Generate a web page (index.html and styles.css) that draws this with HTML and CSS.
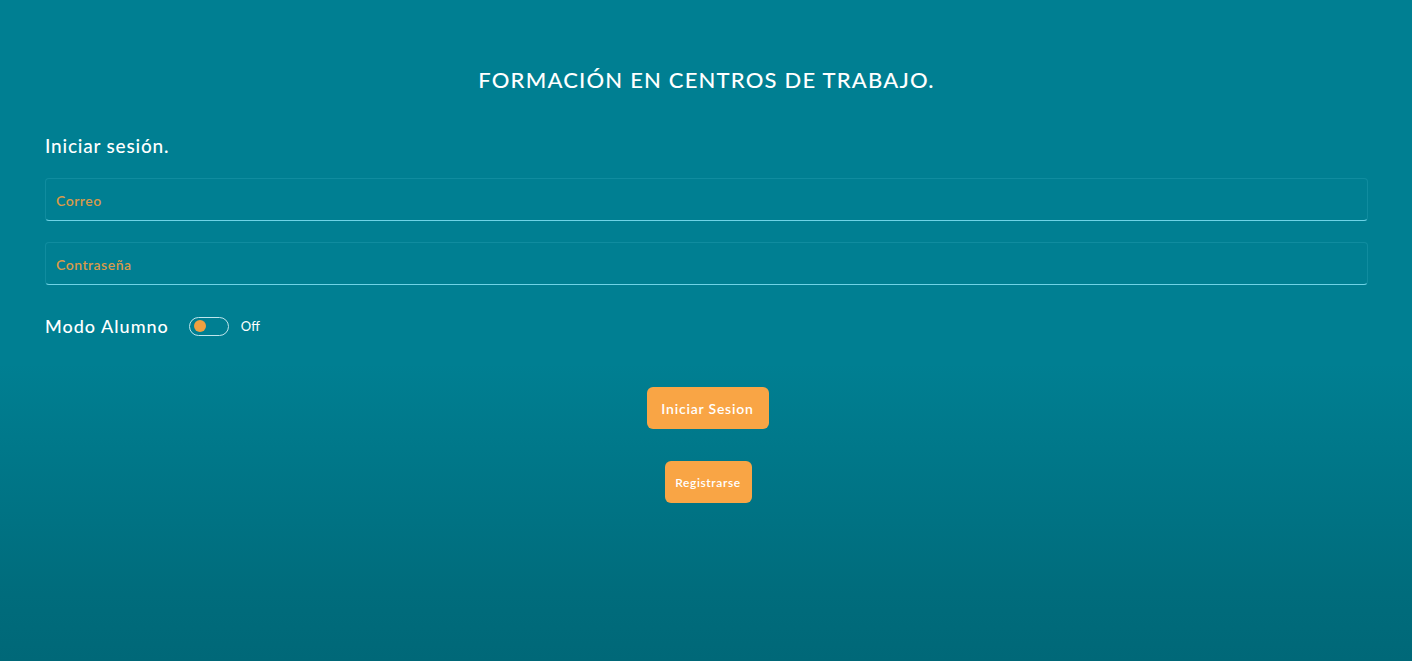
FILE: index.html
```html
<!DOCTYPE html>
<html lang="es">
<head>
<meta charset="utf-8">
<title>Formación en Centros de Trabajo</title>
<link rel="stylesheet" href="styles.css">
</head>
<body>
<main class="page">
  <h1 class="title">FORMACIÓN EN CENTROS DE TRABAJO.</h1>
  <h2 class="subtitle">Iniciar sesión.</h2>
  <form class="form">
    <label class="field"><input type="email" placeholder="Correo"></label>
    <label class="field"><input type="password" placeholder="Contraseña"></label>
    <div class="mode">
      <span class="mode-label">Modo Alumno</span>
      <span class="toggle"><span class="knob"></span></span>
      <span class="toggle-state">Off</span>
    </div>
    <div class="actions">
      <button type="button" class="btn btn-login">Iniciar Sesion</button>
      <button type="button" class="btn btn-register">Registrarse</button>
    </div>
  </form>
</main>
</body>
</html>
```
FILE: styles.css
```css
html, body {
  margin: 0;
  height: 100%;
}
body {
  background: linear-gradient(180deg, #007f92 0%, #007f92 55%, #006c7c 90%, #006878 100%);
  font-family: Lato, "Noto Sans", sans-serif;
  color: #ffffff;
}
.page {
  padding: 66px 44px 0 45px;
  display: flex;
  flex-direction: column;
}
.title {
  margin: 0;
  text-align: center;
  font-size: 22px;
  font-weight: 500;
  letter-spacing: 1.2px;
  line-height: 28px;
}
.subtitle {
  margin: 41px 0 0 0;
  font-size: 19px;
  font-weight: 500;
  letter-spacing: 0.8px;
  line-height: 22px;
}
.form {
  display: flex;
  flex-direction: column;
  margin-top: 21px;
}
.field {
  display: block;
  height: 43px;
  box-sizing: border-box;
  border: 1px solid rgba(90, 200, 220, 0.18);
  border-bottom: 1.5px solid #6fd3e6;
  border-radius: 4px;
  margin-bottom: 21px;
}
.field input {
  width: 100%;
  height: 100%;
  box-sizing: border-box;
  border: 0;
  background: transparent;
  padding: 2px 10px 0;
  font-family: inherit;
  font-size: 14px;
  font-weight: 600;
  letter-spacing: 0.5px;
  color: #ffffff;
  outline: none;
}
.field input::placeholder {
  color: #d99a4a;
}
.mode {
  display: flex;
  align-items: center;
  height: 40px;
}
.mode-label {
  font-size: 18px;
  font-weight: 500;
  letter-spacing: 1px;
}
.toggle {
  margin-left: 20px;
  width: 40px;
  height: 19px;
  box-sizing: border-box;
  border: 1px solid #bfe6ec;
  border-radius: 10px;
  display: flex;
  align-items: center;
  padding-left: 4px;
}
.knob {
  width: 12px;
  height: 12px;
  border-radius: 50%;
  background: #f0a040;
}
.toggle-state {
  margin-left: 12px;
  font-size: 13px;
}
.actions {
  display: flex;
  flex-direction: column;
  align-items: center;
  gap: 32px;
  margin-top: 41px;
}
.btn {
  border: 0;
  background: #f9a545;
  color: #ffffff;
  border-radius: 6px;
  font-family: inherit;
  font-weight: 600;
  height: 42px;
  cursor: pointer;
}
.btn-login {
  width: 122px;
  font-size: 14px;
  letter-spacing: 0.8px;
  margin-left: 2px;
}
.btn-register {
  width: 87px;
  font-size: 12px;
  letter-spacing: 0.6px;
  margin-left: 3px;
}
```
